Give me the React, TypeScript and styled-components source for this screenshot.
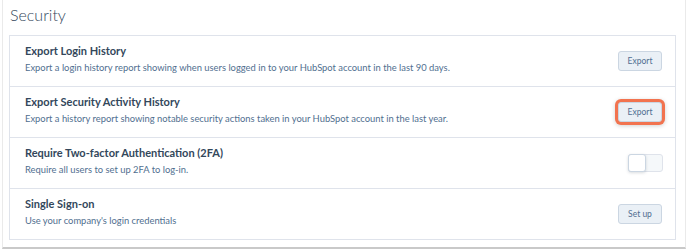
import React from 'react'
import styled, { createGlobalStyle } from 'styled-components'

const GlobalStyle = createGlobalStyle`
  html, body {
    margin: 0;
    background: #ffffff;
    font-family: Lato, "Noto Sans", sans-serif;
    -webkit-font-smoothing: antialiased;
  }
`

const Panel = styled.section`
  margin-left: 2px;
  width: 684px;
  height: 249px;
  box-sizing: border-box;
  background: #ffffff;
  border: 1px solid #eaeaea;
  border-top: none;
  border-bottom: 2px solid #c9c9c9;
  padding: 0 9px 0 6px;
`

const Heading = styled.h2`
  margin: 0;
  box-sizing: border-box;
  height: 35px;
  padding: 5px 0 0 1px;
  font-size: 16px;
  line-height: 20px;
  font-weight: 300;
  color: #33475b;
`

const Card = styled.div`
  border: 1px solid #dfe3eb;
  background: #ffffff;
`

const Row = styled.div`
  display: flex;
  align-items: center;
  justify-content: space-between;
  height: 50px;
  box-sizing: border-box;
  padding: 0 13px 0 15px;
  & + & {
    border-top: 1px solid #dfe3eb;
    height: 51px;
  }
`

const Copy = styled.div`
  align-self: flex-start;
  display: flex;
  flex-direction: column;
  gap: 3px;
  padding-top: 8px;
`

const Title = styled.div`
  font-size: 11px;
  line-height: 14px;
  font-weight: 700;
  color: #33475b;
`

const Description = styled.div`
  font-size: 9.4px;
  line-height: 14px;
  color: #516f90;
`

const Button = styled.button<{ $focused?: boolean }>`
  width: 44px;
  height: 20px;
  padding: 0;
  border: 1px solid #cbd6e2;
  border-radius: 3px;
  background: #eaf0f6;
  color: #506e91;
  font-family: Lato, "Noto Sans", sans-serif;
  font-size: 8.5px;
  cursor: pointer;
  box-shadow: ${({ $focused }) =>
    $focused ? '0 0 0 3px #f2734f, 0 1px 4px 3px rgba(0,0,0,0.18)' : 'none'};
`

const Toggle = styled.div`
  display: flex;
  width: 35px;
  height: 18px;
  margin-right: -1px;
  border: 1px solid #dfe3eb;
  border-radius: 3px;
  background: #f5f8fa;
  box-sizing: border-box;
`

const Knob = styled.div`
  width: 18px;
  height: 18px;
  margin: -1px 0 0 -1px;
  box-sizing: border-box;
  border: 1px solid #cbd6e2;
  border-radius: 3px;
  background: #ffffff;
  box-shadow: 0 1px 3px rgba(45, 62, 80, 0.18);
`

const settings = [
  {
    title: 'Export Login History',
    text: 'Export a login history report showing when users logged in to your HubSpot account in the last 90 days.',
    action: 'Export',
  },
  {
    title: 'Export Security Activity History',
    text: 'Export a history report showing notable security actions taken in your HubSpot account in the last year.',
    action: 'Export',
    focused: true,
  },
  {
    title: 'Require Two-factor Authentication (2FA)',
    text: 'Require all users to set up 2FA to log-in.',
    toggle: true,
  },
  {
    title: 'Single Sign-on',
    text: "Use your company's login credentials",
    action: 'Set up',
  },
]

export default function App() {
  return (
    <>
      <GlobalStyle />
      <Panel>
        <Heading>Security</Heading>
        <Card>
          {settings.map((s) => (
            <Row key={s.title}>
              <Copy>
                <Title>{s.title}</Title>
                <Description>{s.text}</Description>
              </Copy>
              {s.toggle ? (
                <Toggle>
                  <Knob />
                </Toggle>
              ) : (
                <Button $focused={s.focused}>{s.action}</Button>
              )}
            </Row>
          ))}
        </Card>
      </Panel>
    </>
  )
}
